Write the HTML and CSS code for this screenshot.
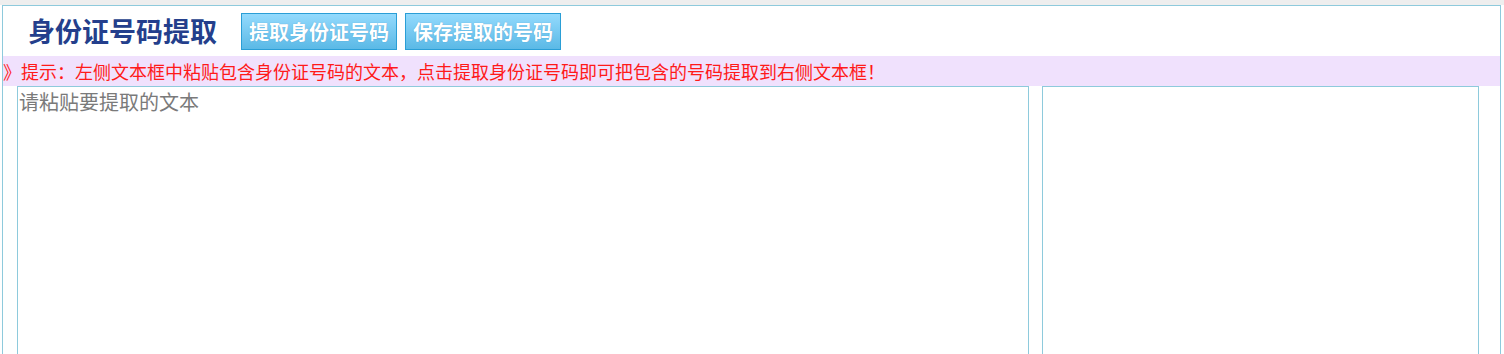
FILE: index.html
```html
<!DOCTYPE html>
<html lang="zh-CN">
<head>
<meta charset="utf-8">
<title>身份证号码提取</title>
<link rel="stylesheet" href="styles.css">
</head>
<body>
<div class="topstrip"></div>
<div class="panel">
  <div class="header">
    <h1 class="title">身份证号码提取</h1>
    <button class="btn">提取身份证号码</button>
    <button class="btn">保存提取的号码</button>
  </div>
  <div class="tip">》提示：左侧文本框中粘贴包含身份证号码的文本，点击提取身份证号码即可把包含的号码提取到右侧文本框！</div>
  <div class="areas">
    <textarea class="src" placeholder="请粘贴要提取的文本"></textarea>
    <textarea class="dst"></textarea>
  </div>
</div>
</body>
</html>
```
FILE: styles.css
```css
html, body {
  margin: 0;
  padding: 0;
  background: #ffffff;
  overflow: hidden;
}
body {
  font-family: "Noto Sans CJK SC", "Liberation Sans", sans-serif;
}
.topstrip {
  height: 5px;
  background: #eeeeee;
}
.panel {
  margin-left: 2px;
  width: 1497px;
  height: 400px;
  border: 1px solid #8ecadc;
  background: #ffffff;
}
.header {
  display: flex;
  align-items: center;
  height: 50px;
  padding-left: 25px;
  box-sizing: border-box;
}
.title {
  margin: 0 24px 0 0;
  font-size: 27px;
  line-height: 30px;
  font-weight: bold;
  color: #243f8c;
  letter-spacing: 0;
}
.btn {
  height: 37px;
  margin: 1px 8px 0 0;
  padding: 0 7px;
  border: 1px solid #2a9ed6;
  background: linear-gradient(to bottom, #93dafd, #5bb9e6);
  color: #ffffff;
  font-family: "Noto Sans CJK SC", "Liberation Sans", sans-serif;
  font-size: 20px;
  font-weight: bold;
  line-height: 35px;
  text-shadow: 0 0 1px rgba(0, 80, 140, 0.4);
}
.tip {
  height: 30px;
  line-height: 30px;
  background: #f0e1fd;
  color: #ff1a1a;
  font-size: 18px;
  white-space: nowrap;
}
.areas {
  display: flex;
  gap: 13px;
  padding-left: 14px;
}
.areas textarea {
  box-sizing: border-box;
  height: 300px;
  margin: 0;
  border: 1px solid #8ecadc;
  padding: 2px 2px 2px 1px;
  resize: none;
  font-family: "Noto Sans CJK SC", "Liberation Sans", sans-serif;
  font-size: 20px;
  line-height: 26px;
  outline: none;
}
.areas textarea::placeholder {
  color: #7a7a7a;
}
.src {
  width: 1012px;
}
.dst {
  width: 437px;
}
```
